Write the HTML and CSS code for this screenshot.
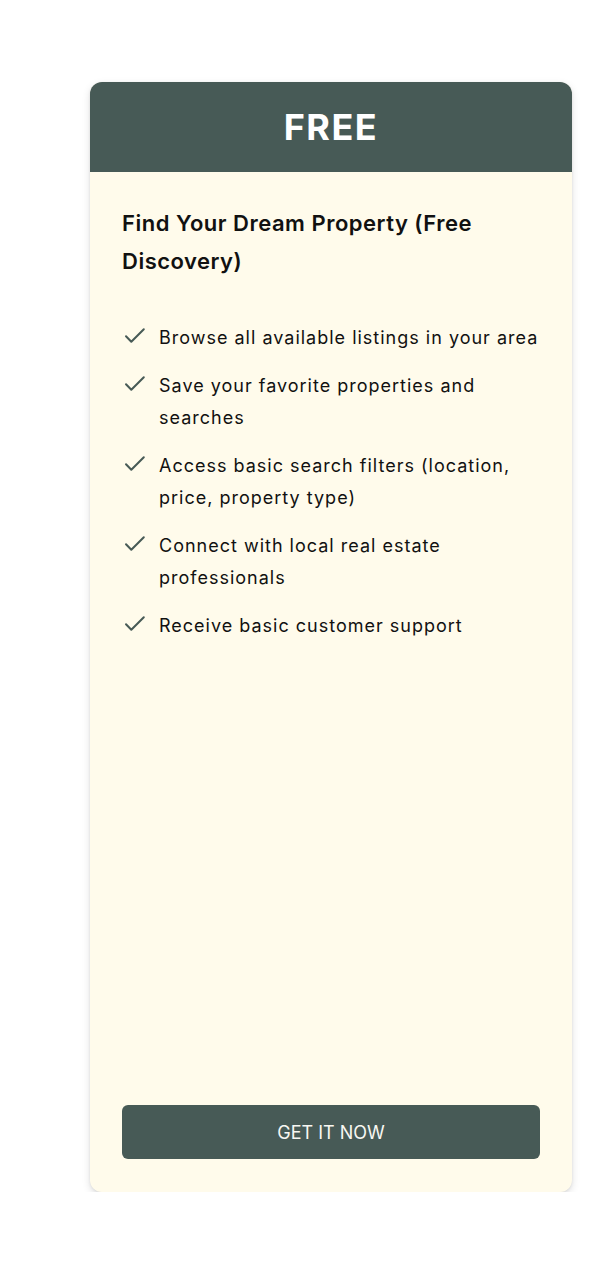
FILE: index.html
```html
<!DOCTYPE html>
<html lang="en">
<head>
<meta charset="utf-8">
<title>Pricing</title>
<link rel="stylesheet" href="styles.css">
</head>
<body>
<div class="page">
  <div class="card">
    <div class="card-header">FREE</div>
    <div class="card-body">
      <h2 class="plan-title">Find Your Dream Property (Free Discovery)</h2>
      <ul class="features">
        <li><svg class="check" viewBox="0 0 25 24" width="25" height="24"><path d="M4 11.2 9.3 16.8 21.8 4.2" fill="none" stroke="currentColor" stroke-width="2" stroke-linecap="round" stroke-linejoin="round"/></svg><span>Browse all available listings in your area</span></li>
        <li><svg class="check" viewBox="0 0 25 24" width="25" height="24"><path d="M4 11.2 9.3 16.8 21.8 4.2" fill="none" stroke="currentColor" stroke-width="2" stroke-linecap="round" stroke-linejoin="round"/></svg><span>Save your favorite properties and searches</span></li>
        <li><svg class="check" viewBox="0 0 25 24" width="25" height="24"><path d="M4 11.2 9.3 16.8 21.8 4.2" fill="none" stroke="currentColor" stroke-width="2" stroke-linecap="round" stroke-linejoin="round"/></svg><span>Access basic search filters (location, price, property type)</span></li>
        <li><svg class="check" viewBox="0 0 25 24" width="25" height="24"><path d="M4 11.2 9.3 16.8 21.8 4.2" fill="none" stroke="currentColor" stroke-width="2" stroke-linecap="round" stroke-linejoin="round"/></svg><span>Connect with local real estate professionals</span></li>
        <li><svg class="check" viewBox="0 0 25 24" width="25" height="24"><path d="M4 11.2 9.3 16.8 21.8 4.2" fill="none" stroke="currentColor" stroke-width="2" stroke-linecap="round" stroke-linejoin="round"/></svg><span>Receive basic customer support</span></li>
      </ul>
      <button class="cta">GET IT NOW</button>
    </div>
  </div>
</div>
</body>
</html>
```
FILE: styles.css
```css
* { box-sizing: border-box; }
html, body { margin: 0; padding: 0; background: #ffffff; }
body { font-family: Inter, "Noto Sans", "Liberation Sans", sans-serif; color: #111111; }
.page { padding: 82px 0 0 90px; }
.card {
  width: 482px;
  height: 1110px;
  display: flex;
  flex-direction: column;
  border-radius: 12px;
  overflow: hidden;
  background: #fffbeb;
  box-shadow: 0 3px 8px rgba(0,0,0,0.12), 0 1px 3px rgba(0,0,0,0.08);
}
.card-header {
  height: 90px;
  flex: none;
  display: flex;
  align-items: center;
  justify-content: center;
  background: #475a56;
  color: #ffffff;
  font-size: 36px;
  font-weight: 700;
  line-height: 40px;
  letter-spacing: 1.5px;
}
.card-body {
  flex: 1;
  display: flex;
  flex-direction: column;
  padding: 32px 32px 33px;
}
.plan-title {
  margin: 0 0 42px;
  font-size: 22px;
  font-weight: 600;
  line-height: 38px;
  letter-spacing: 0.5px;
  color: #111111;
}
.features {
  list-style: none;
  margin: 0;
  padding: 0;
  display: flex;
  flex-direction: column;
  gap: 16px;
}
.features li {
  display: flex;
  align-items: flex-start;
  gap: 12px;
  font-size: 18px;
  line-height: 32px;
  letter-spacing: 1px;
  color: #111111;
}
.check { flex: none; color: #475a56; margin-top: 3px; }
.cta {
  margin-top: auto;
  height: 54px;
  width: 100%;
  border: none;
  border-radius: 6px;
  background: #475a56;
  color: #f7f7f2;
  font-family: Inter, "Noto Sans", "Liberation Sans", sans-serif;
  font-size: 18px;
  font-weight: 400;
  cursor: pointer;
}
```
